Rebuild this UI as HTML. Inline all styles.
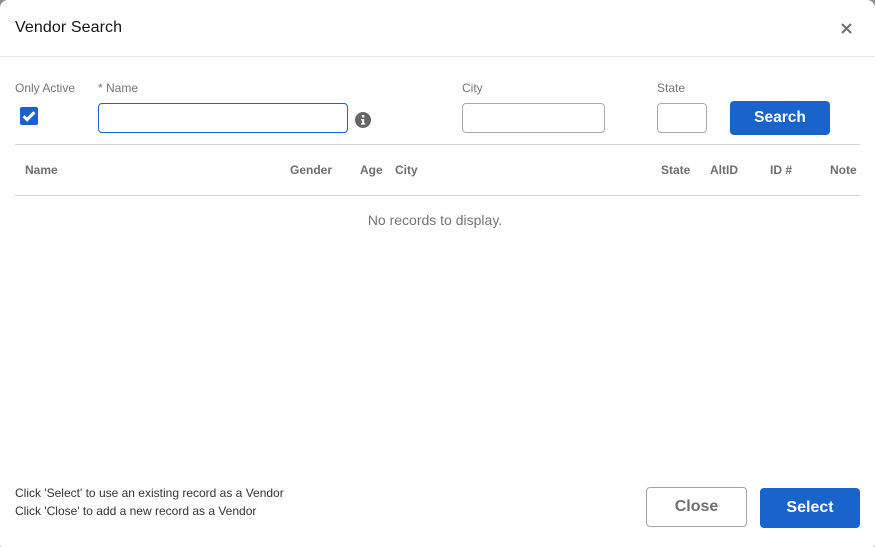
<!DOCTYPE html>
<html><head><meta charset="utf-8"><style>
html,body{margin:0;padding:0;width:875px;height:547px;overflow:hidden;background:#8f8f8f}
#m{position:absolute;left:0;top:0;width:875px;height:547px;background:#fff;border-radius:8px 8px 2px 2px;overflow:hidden;font-family:"Liberation Sans",sans-serif;color:#707070}
#m div,#m svg{position:absolute;white-space:nowrap}
.l{font-size:12px;line-height:14px;top:81px;color:#757575}
.h{font-size:12px;font-weight:700;line-height:14px;top:163px;color:#6e6e6e}
.i{box-sizing:border-box;height:30px;top:103px;background:#fff;border:1px solid #aaa;border-radius:4px}
.b{background:#1963cc;color:#fff;font-weight:700;font-size:16px;text-align:center;border-radius:4px}
.t{font-size:12px;line-height:14px;left:15px;color:#333}
</style></head><body><div id="m">
<div style="left:15px;top:18px;font-size:16px;line-height:20px;color:#151515;letter-spacing:.1px">Vendor Search</div>
<svg style="left:839.5px;top:21.5px" width="13" height="13" viewBox="0 0 13 13"><path d="M2 2L11 11M11 2L2 11" stroke="#707070" stroke-width="2" fill="none"/></svg>
<div style="left:0;top:56px;width:875px;height:1px;background:#e9e9e9"></div>
<div class="l" style="left:15px">Only Active</div>
<div class="l" style="left:98px">* Name</div>
<div class="l" style="left:462px">City</div>
<div class="l" style="left:657px">State</div>
<div style="left:20px;top:107px;width:18px;height:18px;background:#1963cc;border-radius:2px"></div>
<svg style="left:20px;top:107px" width="18" height="18" viewBox="0 0 18 18"><path d="M3.6 9.2L7.2 12.6L14.4 5.2" stroke="#fff" stroke-width="3" fill="none"/></svg>
<div class="i" style="left:98px;width:250px;border-color:#1963cc"></div>
<svg style="left:355px;top:112px" width="16" height="16" viewBox="0 0 16 16"><circle cx="8" cy="8" r="8" fill="#666"/><rect x="6.9" y="3" width="2.4" height="2.4" fill="#fff"/><path d="M6 7H9.2V11.2H10.2V12.6H6V11.2H7V8.4H6Z" fill="#fff"/></svg>
<div class="i" style="left:462px;width:143px"></div>
<div class="i" style="left:657px;width:50px"></div>
<div class="b" style="left:730px;top:101px;width:100px;height:34px;line-height:33px;font-size:15.5px">Search</div>
<div style="left:15px;top:144px;width:845px;height:1px;background:#d3d3d3"></div>
<div class="h" style="left:25px">Name</div>
<div class="h" style="left:290px">Gender</div>
<div class="h" style="left:360px">Age</div>
<div class="h" style="left:395px">City</div>
<div class="h" style="left:661px">State</div>
<div class="h" style="left:710px">AltID</div>
<div class="h" style="left:770px">ID #</div>
<div class="h" style="left:830px">Note</div>
<div style="left:15px;top:195px;width:845px;height:1px;background:#d3d3d3"></div>
<div style="left:15px;width:840px;top:212px;line-height:16px;font-size:14px;text-align:center;color:#757575">No records to display.</div>
<div class="t" style="top:486px">Click 'Select' to use an existing record as a Vendor</div>
<div class="t" style="top:504px">Click 'Close' to add a new record as a Vendor</div>
<div class="b" style="box-sizing:border-box;left:646px;top:487px;width:101px;height:40px;line-height:38px;background:#fff;border:1px solid #a3a3a3;color:#707070">Close</div>
<div class="b" style="left:760px;top:488px;width:100px;height:40px;line-height:39px">Select</div>
</div></body></html>
